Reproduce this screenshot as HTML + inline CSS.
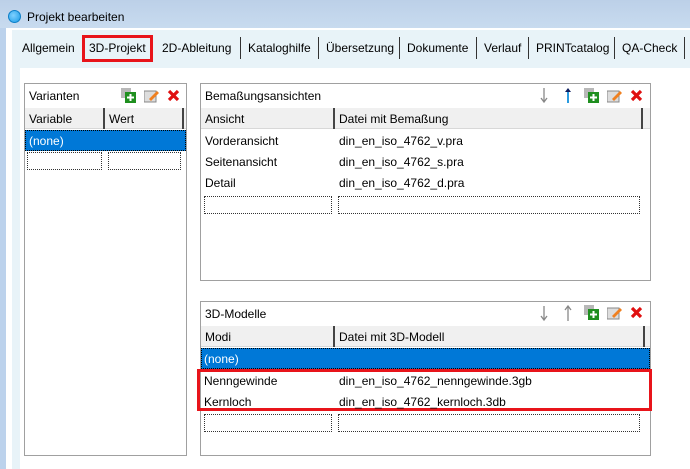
<!DOCTYPE html>
<html><head><meta charset="utf-8"><style>
*{margin:0;padding:0;box-sizing:border-box}
body{width:690px;height:469px;overflow:hidden;background:#fff;font-family:"Liberation Sans",sans-serif;font-size:12px;color:#000;position:relative}
.a{position:absolute;white-space:nowrap}
.panel{position:absolute;border:1px solid #a0a0a0;background:#fff}
.hdr{position:absolute;background:#f0f0f0;border-bottom:1px solid #d8d8d8}
.sep{position:absolute;width:2px;background:#444}
.dot{position:absolute;border:1px dotted #333;height:18px}
.sel{position:absolute;background:#0078d7;color:#fff;border:1px dotted #000}
.ts{position:absolute;top:37px;width:1px;height:22px;background:#333}
</style></head><body>
<!-- title bar -->
<div class="a" style="left:0;top:0;width:690px;height:28px;background:linear-gradient(#bcd0e8,#c8dbef)"></div>
<div class="a" style="left:8px;top:10px;width:13px;height:13px;border-radius:50%;background:radial-gradient(circle at 40% 40%,#7fd0ff,#1a9be6);border:1px solid #0d7fc7"></div>
<div class="a" style="left:27px;top:10px;font-size:12px">Projekt bearbeiten</div>
<!-- frame -->
<div class="a" style="left:0;top:28px;width:6px;height:441px;background:#bcd2ec"></div>
<div class="a" style="left:6px;top:28px;width:684px;height:441px;background:#fff"></div>
<div class="a" style="left:12px;top:30px;width:678px;height:439px;background:#e8f3f8"></div>
<div class="a" style="left:20px;top:68px;width:670px;height:401px;background:#fff"></div>
<!-- tabs -->
<div class="a" style="left:22px;top:41px">Allgemein</div>
<div class="a" style="left:82px;top:35px;width:71px;height:27px;border:3px solid #e8141a"></div>
<div class="a" style="left:89px;top:41px">3D-Projekt</div>
<div class="a" style="left:162px;top:41px">2D-Ableitung</div>
<div class="ts" style="left:240px"></div>
<div class="a" style="left:248px;top:41px">Kataloghilfe</div>
<div class="ts" style="left:318px"></div>
<div class="a" style="left:326px;top:41px">Übersetzung</div>
<div class="ts" style="left:399px"></div>
<div class="a" style="left:407px;top:41px">Dokumente</div>
<div class="ts" style="left:476px"></div>
<div class="a" style="left:484px;top:41px">Verlauf</div>
<div class="ts" style="left:528px"></div>
<div class="a" style="left:536px;top:41px">PRINTcatalog</div>
<div class="ts" style="left:614px"></div>
<div class="a" style="left:622px;top:41px">QA-Check</div>
<div class="ts" style="left:684px"></div>

<!-- left panel -->
<div class="panel" style="left:24px;top:83px;width:163px;height:373px"></div>
<div class="a" style="left:29px;top:89px">Varianten</div>
<svg class="a" style="left:121px;top:88px" width="15" height="15"><rect x="0" y="0" width="10" height="10" fill="#b8b8b8"/><rect x="4" y="4" width="11" height="11" fill="#1f8f1f"/><path d="M9.5 6v7M6 9.5h7" stroke="#fff" stroke-width="2"/></svg>
<svg class="a" style="left:144px;top:88px" width="15" height="15"><rect x="0" y="3" width="12" height="11" fill="#ddd" stroke="#888"/><path d="M5 11l8-8 2 2-8 8z" fill="#f08020"/></svg>
<svg class="a" style="left:167px;top:89px" width="13" height="13"><path d="M2 2l9 9M11 2l-9 9" stroke="#e01010" stroke-width="3.2"/></svg>
<div class="hdr" style="left:25px;top:108px;width:161px;height:21px"></div>
<div class="a" style="left:29px;top:112px">Variable</div>
<div class="sep" style="left:103px;top:108px;height:21px"></div>
<div class="a" style="left:109px;top:112px">Wert</div>
<div class="sep" style="left:182px;top:108px;height:21px"></div>
<div class="sel" style="left:25px;top:130px;width:161px;height:21px"></div>
<div class="a" style="left:29px;top:134px;color:#fff">(none)</div>
<div class="dot" style="left:27px;top:152px;width:75px"></div>
<div class="dot" style="left:108px;top:152px;width:73px"></div>

<!-- right top panel -->
<div class="panel" style="left:200px;top:83px;width:451px;height:198px"></div>
<div class="a" style="left:205px;top:89px">Bemaßungsansichten</div>
<svg class="a" style="left:539px;top:87px" width="10" height="17"><path d="M5 1v14M2 11l3 4 3-4" stroke="#888" stroke-width="1.3" fill="none"/></svg>
<svg class="a" style="left:563px;top:87px" width="10" height="17"><path d="M5 16V3" stroke="#2a9be0" stroke-width="2"/><path d="M2 5l3-4 3 4z" fill="#102060"/></svg>
<svg class="a" style="left:584px;top:88px" width="15" height="15"><rect x="0" y="0" width="10" height="10" fill="#b8b8b8"/><rect x="4" y="4" width="11" height="11" fill="#1f8f1f"/><path d="M9.5 6v7M6 9.5h7" stroke="#fff" stroke-width="2"/></svg>
<svg class="a" style="left:607px;top:88px" width="15" height="15"><rect x="0" y="3" width="12" height="11" fill="#ddd" stroke="#888"/><path d="M5 11l8-8 2 2-8 8z" fill="#f08020"/></svg>
<svg class="a" style="left:630px;top:89px" width="13" height="13"><path d="M2 2l9 9M11 2l-9 9" stroke="#e01010" stroke-width="3.2"/></svg>
<div class="hdr" style="left:201px;top:108px;width:449px;height:21px"></div>
<div class="a" style="left:205px;top:112px">Ansicht</div>
<div class="sep" style="left:333px;top:108px;height:21px"></div>
<div class="a" style="left:339px;top:112px">Datei mit Bemaßung</div>
<div class="sep" style="left:641px;top:108px;height:21px"></div>
<div class="a" style="left:205px;top:134px">Vorderansicht</div><div class="a" style="left:339px;top:134px">din_en_iso_4762_v.pra</div>
<div class="a" style="left:205px;top:155px">Seitenansicht</div><div class="a" style="left:339px;top:155px">din_en_iso_4762_s.pra</div>
<div class="a" style="left:205px;top:176px">Detail</div><div class="a" style="left:339px;top:176px">din_en_iso_4762_d.pra</div>
<div class="dot" style="left:204px;top:196px;width:128px"></div>
<div class="dot" style="left:338px;top:196px;width:302px"></div>

<!-- right bottom panel -->
<div class="panel" style="left:200px;top:301px;width:451px;height:155px"></div>
<div class="a" style="left:205px;top:307px">3D-Modelle</div>
<svg class="a" style="left:539px;top:305px" width="10" height="17"><path d="M5 1v14M2 11l3 4 3-4" stroke="#888" stroke-width="1.3" fill="none"/></svg>
<svg class="a" style="left:563px;top:305px" width="10" height="17"><path d="M5 16V2M2 5l3-4 3 4" stroke="#888" stroke-width="1.3" fill="none"/></svg>
<svg class="a" style="left:584px;top:305px" width="15" height="15"><rect x="0" y="0" width="10" height="10" fill="#b8b8b8"/><rect x="4" y="4" width="11" height="11" fill="#1f8f1f"/><path d="M9.5 6v7M6 9.5h7" stroke="#fff" stroke-width="2"/></svg>
<svg class="a" style="left:607px;top:305px" width="15" height="15"><rect x="0" y="3" width="12" height="11" fill="#ddd" stroke="#888"/><path d="M5 11l8-8 2 2-8 8z" fill="#f08020"/></svg>
<svg class="a" style="left:630px;top:306px" width="13" height="13"><path d="M2 2l9 9M11 2l-9 9" stroke="#e01010" stroke-width="3.2"/></svg>
<div class="hdr" style="left:201px;top:326px;width:449px;height:21px"></div>
<div class="a" style="left:205px;top:330px">Modi</div>
<div class="sep" style="left:333px;top:326px;height:21px"></div>
<div class="a" style="left:339px;top:330px">Datei mit 3D-Modell</div>
<div class="sep" style="left:643px;top:326px;height:21px"></div>
<div class="sel" style="left:201px;top:348px;width:449px;height:21px"></div>
<div class="a" style="left:204px;top:352px;color:#fff">(none)</div>
<div class="a" style="left:197px;top:369px;width:455px;height:42px;border:3px solid #e8141a"></div>
<div class="a" style="left:204px;top:374px">Nenngewinde</div><div class="a" style="left:339px;top:374px">din_en_iso_4762_nenngewinde.3gb</div>
<div class="a" style="left:204px;top:395px">Kernloch</div><div class="a" style="left:339px;top:395px">din_en_iso_4762_kernloch.3db</div>
<div class="dot" style="left:204px;top:414px;width:128px"></div>
<div class="dot" style="left:338px;top:414px;width:302px"></div>
</body></html>
